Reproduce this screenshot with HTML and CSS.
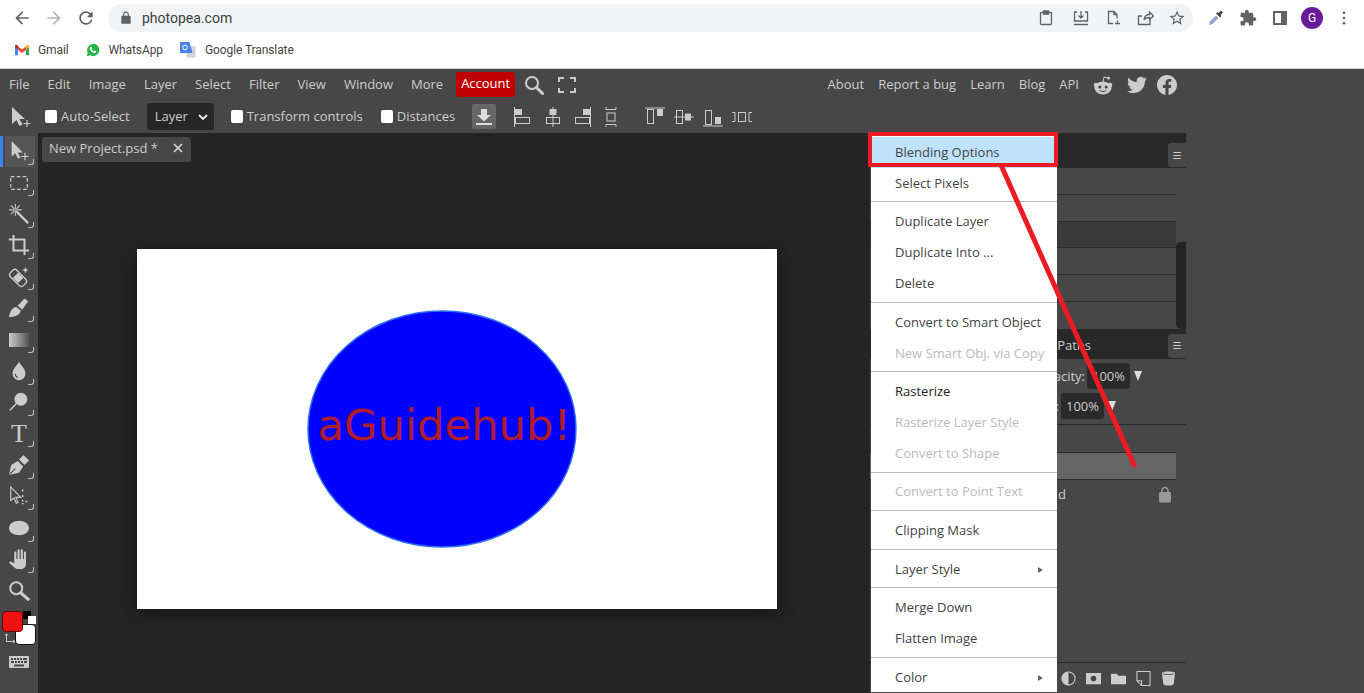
FILE: index.html
```html
<!DOCTYPE html>
<html lang="en">
<head>
    <meta charset="UTF-8">
    <meta name="viewport" content="width=device-width, initial-scale=1.0">
    <title>Photopea</title>
    <link rel="stylesheet" href="styles.css">
</head>
<body>
    <div class="browser-bar">
        <div class="nav-btn"><svg viewBox="0 0 24 24" class="ic-20 gray"><path d="M20 11H7.83l5.59-5.59L12 4l-8 8 8 8 1.41-1.41L7.83 13H20v-2z"/></svg></div>
        <div class="nav-btn"><svg viewBox="0 0 24 24" class="ic-20 light"><path d="M4 11h12.17l-5.59-5.59L12 4l8 8-8 8-1.41-1.41L16.17 13H4v-2z"/></svg></div>
        <div class="nav-btn"><svg viewBox="0 0 24 24" class="ic-20 gray"><path d="M17.65 6.35A7.958 7.958 0 0012 4c-4.42 0-7.99 3.58-7.99 8s3.57 8 7.99 8c3.73 0 6.84-2.55 7.73-6h-2.08A5.99 5.99 0 0112 18c-3.31 0-6-2.69-6-6s2.69-6 6-6c1.66 0 3.14.69 4.22 1.78L13 11h7V4l-2.35 2.35z"/></svg></div>
        <div class="url-pill">
            <svg viewBox="0 0 24 24" class="ic-14 gray"><path d="M18 8h-1V6c0-2.76-2.24-5-5-5S7 3.24 7 6v2H6c-1.1 0-2 .9-2 2v10c0 1.1.9 2 2 2h12c1.1 0 2-.9 2-2V10c0-1.1-.9-2-2-2zM9 6c0-1.66 1.34-3 3-3s3 1.34 3 3v2H9V6z"/></svg>
            <span class="url-text">photopea.com</span>
            <div class="url-actions">
                <div class="nav-btn nudge"><svg viewBox="0 0 18 18" class="ic-18 line"><rect x="3.5" y="3.5" width="11" height="12" rx="1"/><path d="M6.5 2h5v3h-5z" class="solid"/></svg></div>
                <div class="nav-btn"><svg viewBox="0 0 18 18" class="ic-18 line"><path d="M5 3H2.500v9h13V3H13M9 2v7M6.500 6.500 9 9l2.500-2.500M2 15.500h14"/></svg></div>
                <div class="nav-btn"><svg viewBox="0 0 18 18" class="ic-18 line"><path d="M9 14.500H4.500v-12H10l3 3v4M10 2.500v3h3M11 14.500h5M13.500 11.500v2"/></svg></div>
                <div class="nav-btn"><svg viewBox="0 0 18 18" class="ic-18 line"><path d="M14 10.500v5H2.500V7H6M8 11c0-4 3-5.500 5.500-5.500V3l4 4-4 3.500V8.500C11 8.500 9 9 8 11z"/></svg></div>
                <div class="nav-btn"><svg viewBox="0 0 24 24" class="ic-18 gray"><path d="M22 9.240l-7.190-.62L12 2 9.190 8.630 2 9.240l5.460 4.730L5.820 21 12 17.270 18.180 21l-1.630-7.030L22 9.240zM12 15.400l-3.760 2.270 1-4.280-3.320-2.880 4.380-.38L12 6.100l1.710 4.040 4.380.38-3.320 2.880 1 4.280L12 15.400z"/></svg></div>
            </div>
        </div>
        <div class="ext-icons">
            <div class="nav-btn"><svg viewBox="0 0 18 18" class="ic-18"><path d="M2 16l1-3.500 6-6 2.500 2.500-6 6z" fill="#8ea4d8"/><path d="M9 4.500l1.500-1.500 1 1 2.500-2.500 2 2-2.500 2.500 1 1-1.500 1.500z" fill="#444"/></svg></div>
            <div class="nav-btn"><svg viewBox="0 0 24 24" class="ic-18 gray"><path d="M20.500 11H19V7c0-1.100-.9-2-2-2h-4V3.500C13 2.120 11.880 1 10.500 1S8 2.120 8 3.500V5H4c-1.100 0-1.990.9-1.990 2v3.800H3.500c1.490 0 2.700 1.210 2.700 2.700s-1.210 2.700-2.700 2.700H2V20c0 1.100.9 2 2 2h3.800v-1.500c0-1.490 1.210-2.700 2.700-2.700 1.490 0 2.700 1.210 2.700 2.700V22H17c1.100 0 2-.9 2-2v-4h1.500c1.380 0 2.500-1.120 2.500-2.500S21.880 11 20.500 11z"/></svg></div>
            <div class="nav-btn"><div class="side-panel-ic"></div></div>
            <div class="nav-btn"><div class="avatar">G</div></div>
            <div class="nav-btn"><svg viewBox="0 0 4 16" class="ic-dots gray"><circle cx="2" cy="2" r="1.500"/><circle cx="2" cy="8" r="1.500"/><circle cx="2" cy="14" r="1.500"/></svg></div>
        </div>
    </div>

    <div class="bookmarks">
        <div class="bookmark">
            <svg viewBox="0 0 16 12" class="bm-ic"><path d="M0 2v9a1 1 0 001 1h2.500V5.500L0 2z" fill="#4285f4"/><path d="M16 2v9a1 1 0 01-1 1h-2.500V5.500L16 2z" fill="#34a853"/><path d="M3.500 6V2L8 5.500 12.500 2v4L8 9.400z" fill="#ea4335"/><path d="M0 2.500V1.600C0 .3 1.500-.4 2.500.4l1 .8v4.300z" fill="#c5221f"/><path d="M16 2.500V1.600c0-1.300-1.500-2-2.500-1.200l-1 .8v4.300z" fill="#fbbc04"/></svg>
            Gmail
        </div>
        <div class="bookmark">
            <svg viewBox="0 0 16 16" class="bm-ic"><path d="M1 15l1-3.800A7 7 0 118 15a7 7 0 01-3.300-.9z" fill="#25b34b"/><path d="M5.800 4.200c.4 0 .6.100.8.600l.5 1.200-.7 1c.6 1.200 1.500 2 2.700 2.600l.9-1 1.300.6c.3.200.4.400.3.800-.2.900-1.100 1.500-2 1.400-2.600-.3-5-2.600-5.400-5.100-.1-1 .6-2 1.600-2.100z" fill="#fff"/></svg>
            WhatsApp
        </div>
        <div class="bookmark">
            <svg viewBox="0 0 16 16" class="bm-ic"><path d="M5 4h10.500v11.500H7z" fill="#cfd3da"/><path d="M0 0h9.500l3 11H0z" fill="#4a84ec"/><circle cx="5" cy="5.500" r="2.300" fill="none" stroke="#fff" stroke-width="1"/></svg>
            Google Translate
        </div>
    </div>

    <div class="menu-bar">
        <span class="menu-item">File</span>
        <span class="menu-item">Edit</span>
        <span class="menu-item">Image</span>
        <span class="menu-item">Layer</span>
        <span class="menu-item">Select</span>
        <span class="menu-item">Filter</span>
        <span class="menu-item">View</span>
        <span class="menu-item">Window</span>
        <span class="menu-item">More</span>
        <span class="account-btn">Account</span>
        <svg viewBox="0 0 20 20" class="search-ic"><circle cx="8" cy="8" r="6" fill="none" stroke="#ccc" stroke-width="2"/><path d="M12.500 12.500l6 6" stroke="#ccc" stroke-width="3" stroke-linecap="round"/></svg>
        <svg viewBox="0 0 18 16" class="full-ic"><path d="M1 5V1h5M12 1h5v4M17 11v4h-5M6 15H1v-4" fill="none" stroke="#ccc" stroke-width="2"/></svg>
        <div class="menu-right">
            <span class="link-item">About</span>
            <span class="link-item">Report a bug</span>
            <span class="link-item">Learn</span>
            <span class="link-item">Blog</span>
            <span class="link-item">API</span>
            <svg viewBox="0 0 20 20" class="social reddit"><circle cx="3" cy="10" r="2.300"/><circle cx="17" cy="10" r="2.300"/><ellipse cx="10" cy="13" rx="8.500" ry="6.500"/><path d="M10 7l1-5 4 1" fill="none" stroke="#ccc" stroke-width="1"/><circle cx="15.500" cy="3" r="1.500"/><circle cx="6.800" cy="12" r="1.500" fill="#474747"/><circle cx="13.200" cy="12" r="1.500" fill="#474747"/><path d="M6.500 15.500c2 1.300 5 1.300 7 0" fill="none" stroke="#474747" stroke-width="1"/></svg>
            <svg viewBox="0 0 24 24" class="social twitter"><path d="M23.953 4.570a10 10 0 01-2.825.775 4.958 4.958 0 002.163-2.723c-.951.555-2.005.959-3.127 1.184a4.920 4.920 0 00-8.384 4.482C7.690 8.095 4.067 6.130 1.640 3.162a4.822 4.822 0 00-.666 2.475c0 1.710.870 3.213 2.188 4.096a4.904 4.904 0 01-2.228-.616v.060a4.923 4.923 0 003.946 4.827 4.996 4.996 0 01-2.212.085 4.936 4.936 0 004.604 3.417 9.867 9.867 0 01-6.102 2.105c-.390 0-.779-.023-1.170-.067a13.995 13.995 0 007.557 2.209c9.053 0 13.998-7.496 13.998-13.985 0-.210 0-.420-.015-.630A9.935 9.935 0 0024 4.590z"/></svg>
            <svg viewBox="0 0 24 24" class="social facebook"><path d="M24 12.073c0-6.627-5.373-12-12-12s-12 5.373-12 12c0 5.990 4.388 10.954 10.125 11.854v-8.385H7.078v-3.470h3.047V9.430c0-3.007 1.792-4.669 4.533-4.669 1.312 0 2.686.235 2.686.235v2.953H15.830c-1.491 0-1.956.925-1.956 1.874v2.250h3.328l-.532 3.470h-2.796v8.385C19.612 23.027 24 18.062 24 12.073z"/></svg>
        </div>
    </div>

    <div class="options-bar">
        <svg viewBox="0 0 22 22" class="opt-move"><path d="M1 1v17l4.500-4 3 6 3-1.500-3-5.500H14z"/><path d="M16 14v7M12.500 17.500h7" fill="none" stroke="#ccc" stroke-width="1.200"/></svg>
        <label class="check first"><span class="box"></span><span class="check-text">Auto-Select</span></label>
        <div class="select-box"><span class="check-text">Layer</span><svg viewBox="0 0 10 6" class="chevron"><path d="M1 1l4 4 4-4" fill="none" stroke="#eee" stroke-width="1.800"/></svg></div>
        <label class="check"><span class="box"></span><span class="check-text">Transform controls</span></label>
        <label class="check third"><span class="box"></span><span class="check-text">Distances</span></label>
        <div class="download-btn"><svg viewBox="0 0 18 18" class="ic-18"><path d="M6 1h6v6h4l-7 6.500L2 7h4zM1 15h16v2H1z" fill="#ddd"/></svg></div>
        <div class="align-group">
            <svg viewBox="0 0 18 22" class="al-ic"><path d="M1.500 1v20" class="al-line"/><rect x="2" y="3" width="7" height="6" class="al-fill"/><rect x="2.500" y="11.500" width="14" height="6" class="al-box"/></svg>
            <svg viewBox="0 0 18 22" class="al-ic"><path d="M9 1v20" class="al-line"/><rect x="5.500" y="3" width="7" height="6" class="al-fill"/><rect x="2.500" y="11.500" width="13" height="6" class="al-box"/></svg>
            <svg viewBox="0 0 18 22" class="al-ic"><path d="M16.500 1v20" class="al-line"/><rect x="9" y="3" width="7" height="6" class="al-fill"/><rect x="1.500" y="11.500" width="14" height="6" class="al-box"/></svg>
            <svg viewBox="0 0 12 22" class="al-ic narrow"><path d="M1 1v2.500h10V1M1 21v-2.500h10V21" class="al-box"/><rect x="2" y="7" width="8" height="8" class="al-box"/></svg>
        </div>
        <div class="align-group second">
            <svg viewBox="0 0 22 20" class="al-ic wide"><path d="M1 1h20" class="al-line"/><rect x="3.500" y="2.500" width="6" height="14" class="al-box"/><rect x="13" y="2" width="6" height="7" class="al-fill"/></svg>
            <svg viewBox="0 0 22 20" class="al-ic wide"><path d="M1 10h20" class="al-line"/><rect x="3.500" y="3.500" width="6" height="13" class="al-box"/><rect x="12" y="6.500" width="6" height="7" class="al-fill"/></svg>
            <svg viewBox="0 0 22 20" class="al-ic wide"><path d="M1 19h20" class="al-line"/><rect x="3.500" y="3.500" width="6" height="14" class="al-box"/><rect x="13" y="10" width="6" height="7" class="al-fill"/></svg>
            <svg viewBox="0 0 22 12" class="al-ic wide short"><path d="M1 1.500h3v9H1M21 1.500h-3v9h3" class="al-box"/><rect x="7.500" y="1.500" width="7" height="9" class="al-box"/></svg>
        </div>
    </div>

    <div class="workspace">
        <div class="tool-rail">
            <div class="tool active"><svg viewBox="0 0 24 24" class="tool-ic"><path d="M4 1v17l4-3.500 3 6 2.500-1.300-3-5.700H16z"/><path d="M18.500 14v8M14.500 18h8" fill="none" stroke="#ccc" stroke-width="1.300"/></svg></div>
            <div class="tool"><svg viewBox="0 0 24 24" class="tool-ic"><rect x="3" y="5" width="18" height="14" fill="none" stroke="#ccc" stroke-width="1.300" stroke-dasharray="4 2.500"/></svg></div>
            <div class="tool"><svg viewBox="0 0 24 24" class="tool-ic"><path d="M8 1v6M8 8v6M1 7.500h6M9 7.500h6M3 2.500l4 4M13 2.500l-4 4M3 12.500l4-4M13 12.500l-4-4" stroke="#ccc" stroke-width="1.100"/><path d="M9.500 9.500L22 22" stroke="#ccc" stroke-width="2.500"/></svg></div>
            <div class="tool"><svg viewBox="0 0 24 24" class="tool-ic"><path d="M6 1v17h17M1 6h17v17" fill="none" stroke="#ccc" stroke-width="2.200"/></svg></div>
            <div class="tool"><svg viewBox="0 0 24 24" class="tool-ic"><g transform="rotate(45 11 13)"><rect x="1" y="8" width="20" height="10" rx="3.500" fill="none" stroke="#ccc" stroke-width="1.500"/><rect x="7" y="9" width="8" height="8" fill="#ccc"/></g><path d="M19 1l1 2.500L22.500 4.500 20 5.500 19 8l-1-2.500L15.500 4.500 18 3.500z"/></svg></div>
            <div class="tool"><svg viewBox="0 0 24 24" class="tool-ic"><path d="M1 22C2 16 4 12 9 10.500L14 15C12.500 20 7 22 1 22z"/><path d="M10.500 9.500L18 1.500 22 4.500 15.500 14z"/></svg></div>
            <div class="tool"><div class="gradient-swatch"></div></div>
            <div class="tool"><svg viewBox="0 0 24 24" class="tool-ic"><path d="M12 2c3 5 7 8 7 13a7 7 0 01-14 0c0-5 4-8 7-13z"/><path d="M8 15a4 4 0 003 4" fill="none" stroke="#474747" stroke-width="1.200"/></svg></div>
            <div class="tool"><svg viewBox="0 0 24 24" class="tool-ic"><circle cx="14" cy="9" r="7"/><path d="M9 14l-7 7" stroke="#ccc" stroke-width="1.600"/></svg></div>
            <div class="tool"><span class="type-glyph">T</span></div>
            <div class="tool"><svg viewBox="0 0 24 24" class="tool-ic"><path d="M1 23L3.500 12 10.500 7.500 16.500 13.500 12 20.500z"/><path d="M1.500 22.500L8 16" stroke="#474747" stroke-width="1.100"/><path d="M12 6L17 1 23 7 18 12z"/></svg></div>
            <div class="tool"><svg viewBox="0 0 24 24" class="tool-ic"><path d="M3 2v15l3.500-3 2.500 6 2-1-2.500-5.500H14z" fill="none" stroke="#ccc" stroke-width="1.200"/><path d="M16 5v3M16 11v3M16 16v5M21 18h-3" stroke="#ccc" stroke-width="1.600" stroke-dasharray="2 1.500"/></svg></div>
            <div class="tool"><svg viewBox="0 0 24 24" class="tool-ic"><ellipse cx="12" cy="12" rx="11" ry="8"/></svg></div>
            <div class="tool"><svg viewBox="0 0 24 24" class="tool-ic"><path d="M8 13V5M11.500 13V2.500M15 13V2.500M18.500 14V5" fill="none" stroke="#ccc" stroke-width="2.300" stroke-linecap="round"/><path d="M6.800 12H19.600V17C19.600 21 17 23 14 23H11C8 23 6 20 1 16L3 14.500 6.800 17z"/></svg></div>
            <div class="tool plain"><svg viewBox="0 0 24 24" class="tool-ic"><circle cx="9" cy="9" r="6.500" fill="none" stroke="#ccc" stroke-width="2.200"/><path d="M14 14l8 7" stroke="#ccc" stroke-width="3.500" stroke-linecap="round"/></svg></div>
            <div class="swatches">
                <span class="sw-small sw-black"></span>
                <span class="sw-small sw-white"></span>
                <span class="sw-big sw-bg"></span>
                <span class="sw-big sw-fg"></span>
                <svg viewBox="0 0 12 11" class="sw-swap"><path d="M2.500 1v7.500H11M1 2.500L2.500.8 4 2.500M9 7l2 1.500L9 10" fill="none" stroke="#ccc" stroke-width="1"/></svg>
            </div>
            <svg viewBox="0 0 20 12" class="keyboard"><path fill-rule="evenodd" d="M1 0h18a1 1 0 011 1v10a1 1 0 01-1 1H1a1 1 0 01-1-1V1a1 1 0 011-1zM2 2v2h2V2zm3 0v2h2V2zm3 0v2h2V2zm3 0v2h2V2zm3 0v2h4V2zM2 5v2h3V5zm4 0v2h2V5zm3 0v2h2V5zm3 0v2h2V5zm3 0v2h3V5zM5 8.500v2h10v-2z"/></svg>
        </div>

        <div class="canvas-area">
            <div class="doc-tab"><span>New Project.psd *</span><svg viewBox="0 0 10 10" class="tab-close"><path d="M1 1l8 8M9 1l-8 8" stroke="#ddd" stroke-width="1.500"/></svg></div>
            <div class="doc">
                <svg viewBox="0 0 640 360" class="doc-art">
                    <ellipse cx="305" cy="180" rx="134" ry="118" fill="#0000ff" stroke="#2c6df2" stroke-width="1.500"/>
                    <text x="180.500" y="191" class="doc-text">aGuidehub!</text>
                </svg>
            </div>
        </div>

        <div class="panels">
            <div class="panel-head top">
                <span class="panel-menu">☰</span>
            </div>
            <div class="history">
                <div class="history-rows">
                    <div class="history-row"></div>
                    <div class="history-row"></div>
                    <div class="history-row dim"></div>
                    <div class="history-row"></div>
                    <div class="history-row"></div>
                    <div class="history-row no-line"></div>
                </div>
                <div class="scroll-track"><div class="scroll-thumb"></div></div>
            </div>
            <div class="panel-head">
                <span class="panel-tab">Paths</span>
                <span class="panel-menu">☰</span>
            </div>
            <div class="blend-row first-blend">acity:<span class="num-input">100%</span><span class="tri"></span></div>
            <div class="blend-row second-blend">:<span class="num-input">100%</span><span class="tri"></span></div>
            <div class="layers">
                <div class="layer-row"></div>
                <div class="layer-row selected"></div>
                <div class="layer-row bg-layer">
                    <span class="layer-name">d</span>
                    <svg viewBox="0 0 24 24" class="lock-ic"><path d="M18 8h-1V6c0-2.760-2.240-5-5-5S7 3.240 7 6v2H6c-1.100 0-2 .9-2 2v10c0 1.100.9 2 2 2h12c1.100 0 2-.9 2-2V10c0-1.100-.9-2-2-2zM9 6c0-1.660 1.340-3 3-3s3 1.340 3 3v2H9V6z"/></svg>
                </div>
            </div>
            <div class="panel-foot">
                <svg viewBox="0 0 16 16" class="foot-ic"><circle cx="8" cy="8" r="7" fill="none" stroke="#ccc" stroke-width="1.200"/><path d="M8 1a7 7 0 000 14z"/></svg>
                <svg viewBox="0 0 16 16" class="foot-ic"><path fill-rule="evenodd" d="M0 2h16v12H0zM8 5a3 3 0 100 6 3 3 0 000-6z"/></svg>
                <svg viewBox="0 0 16 16" class="foot-ic"><path d="M0 3h6l2 2h8v9H0z"/></svg>
                <svg viewBox="0 0 16 16" class="foot-ic"><path d="M1 .5h14v15H6l-5-5zM1 10.500h5v5" fill="none" stroke="#ccc" stroke-width="1.100"/></svg>
                <svg viewBox="0 0 16 16" class="foot-ic"><path d="M1 2c2-2 12-2 14 0l-1.500 12c-1 2-10 2-11 0z"/><path d="M2.500 3c2 1 9 1 11 0" stroke="#474747" fill="none"/></svg>
            </div>
        </div>
        <div class="right-strip"></div>
    </div>

    <div class="context-menu">
        <div class="ctx-item hover">Blending Options</div>
        <div class="ctx-item">Select Pixels</div>
        <div class="ctx-sep up"></div>
        <div class="ctx-item">Duplicate Layer</div>
        <div class="ctx-item">Duplicate Into ...</div>
        <div class="ctx-item">Delete</div>
        <div class="ctx-sep"></div>
        <div class="ctx-item">Convert to Smart Object</div>
        <div class="ctx-item off">New Smart Obj. via Copy</div>
        <div class="ctx-sep up"></div>
        <div class="ctx-item dark">Rasterize</div>
        <div class="ctx-item off">Rasterize Layer Style</div>
        <div class="ctx-item off">Convert to Shape</div>
        <div class="ctx-sep close"></div>
        <div class="ctx-item off">Convert to Point Text</div>
        <div class="ctx-sep"></div>
        <div class="ctx-item">Clipping Mask</div>
        <div class="ctx-sep"></div>
        <div class="ctx-item has-sub">Layer Style</div>
        <div class="ctx-sep up"></div>
        <div class="ctx-item">Merge Down</div>
        <div class="ctx-item">Flatten Image</div>
        <div class="ctx-sep"></div>
        <div class="ctx-item has-sub">Color</div>
    </div>

    <svg class="annotation" viewBox="0 0 1364 693">
        <rect x="870" y="134" width="186" height="31" fill="none" stroke="#ed1c24" stroke-width="4"/>
        <path d="M1001 165L1135 467" stroke="#ed1c24" stroke-width="5"/>
    </svg>
</body>
</html>
```

FILE: styles.css
```css
* {
    box-sizing: border-box;
}
body {
    margin: 0;
    width: 1364px;
    height: 693px;
    overflow: hidden;
    position: relative;
    background-color: #474747;
    font-family: "Open Sans", Arial, sans-serif;
    font-size: 13px;
    color: #ccc;
}

/* browser chrome */
.browser-bar {
    display: flex;
    align-items: center;
    height: 35px;
    padding: 1px 0 0 6px;
    background-color: white;
}
.nav-btn {
    width: 32px;
    height: 28px;
    display: flex;
    align-items: center;
    justify-content: center;
    flex-shrink: 0;
}
.nudge {
    margin-right: 3px;
}
.gray {
    fill: #5f6368;
}
.light {
    fill: #b4b6b9;
}
.ic-20 {
    width: 20px;
    height: 20px;
}
.ic-18 {
    width: 18px;
    height: 18px;
}
.ic-14 {
    width: 14px;
    height: 14px;
}
.ic-dots {
    width: 4px;
    height: 14px;
}
.line {
    fill: none;
    stroke: #5f6368;
    stroke-width: 1.300;
}
.line .solid {
    fill: #5f6368;
}
.url-pill {
    flex: 1;
    height: 28px;
    margin-left: 6px;
    padding-left: 11px;
    display: flex;
    align-items: center;
    background-color: #f1f3f4;
    border-radius: 14px;
}
.url-text {
    margin-left: 9px;
    font-family: Roboto, Arial, sans-serif;
    font-size: 14px;
    color: #3c4043;
}
.url-actions {
    margin-left: auto;
    display: flex;
    align-items: center;
}
.ext-icons {
    width: 171px;
    padding-left: 7px;
    display: flex;
    align-items: center;
}
.side-panel-ic {
    width: 14px;
    height: 14px;
    border: 2px solid #5f6368;
    border-right-width: 6px;
}
.avatar {
    width: 22px;
    height: 22px;
    border-radius: 50%;
    background-color: #6a1b9a;
    color: white;
    font-family: Roboto, Arial, sans-serif;
    font-size: 12px;
    line-height: 22px;
    text-align: center;
}
.bookmarks {
    display: flex;
    align-items: center;
    height: 34px;
    padding: 0 0 3px 15px;
    background-color: white;
    border-bottom: 1px solid #d0d0d0;
    font-family: Roboto, Arial, sans-serif;
    font-size: 12px;
    letter-spacing: -0.1px;
    color: #444;
}
.bookmark {
    display: flex;
    align-items: center;
    gap: 9px;
    margin-right: 17px;
}
.bm-ic {
    width: 14px;
    height: 14px;
}
.bookmark:last-child .bm-ic {
    width: 16px;
    height: 16px;
}

/* photopea top bars */
.menu-bar {
    display: flex;
    align-items: center;
    height: 31px;
    background-color: #474747;
}
.menu-item {
    padding: 0 9px 2px;
    white-space: nowrap;
}
.account-btn {
    margin-left: 4px;
    padding: 0 5px;
    height: 25px;
    line-height: 23px;
    background-color: #c00000;
    border-radius: 3px;
    color: white;
}
.search-ic {
    width: 20px;
    height: 20px;
    margin-left: 9px;
}
.full-ic {
    width: 18px;
    height: 16px;
    margin-left: 14px;
}
.menu-right {
    margin-left: auto;
    padding-right: 187px;
    display: flex;
    align-items: center;
}
.link-item {
    padding: 0 7px 2px;
    white-space: nowrap;
}
.social {
    fill: #ccc;
    width: 20px;
    height: 20px;
}
.reddit {
    margin-left: 7px;
}
.twitter {
    margin-left: 14px;
}
.facebook {
    margin-left: 10px;
}
.options-bar {
    display: flex;
    align-items: center;
    height: 33px;
    background-color: #474747;
}
.opt-move {
    width: 22px;
    height: 22px;
    margin-left: 11px;
    fill: #ccc;
}
.check {
    display: flex;
    align-items: center;
    gap: 4px;
    margin-left: 17px;
}
.check.first {
    margin-left: 12px;
}
.check.third {
    margin-left: 18px;
}
.check-text {
    padding-bottom: 2px;
}
.box {
    width: 12px;
    height: 13px;
    background-color: white;
    border-radius: 2px;
}
.select-box {
    display: flex;
    align-items: center;
    justify-content: space-between;
    width: 67px;
    height: 27px;
    margin-left: 17px;
    padding: 0 6px 0 8px;
    background-color: #262626;
    border-radius: 3px;
    color: #ccc;
}
.chevron {
    width: 10px;
    height: 6px;
}
.download-btn {
    display: flex;
    align-items: center;
    justify-content: center;
    width: 24px;
    height: 25px;
    margin-left: 17px;
    background-color: #666;
    border-radius: 2px;
}
.align-group {
    display: flex;
    align-items: center;
    gap: 12.500px;
    margin-left: 17px;
}
.align-group.second {
    gap: 7px;
    margin-left: 27px;
}
.al-ic {
    width: 18px;
    height: 22px;
    fill: none;
}
.al-ic.narrow {
    width: 12px;
}
.al-ic.wide {
    width: 22px;
    height: 20px;
}
.al-ic.short {
    height: 12px;
}
.al-line,
.al-box {
    fill: none;
    stroke: #ccc;
    stroke-width: 1;
}
.al-fill {
    fill: #ccc;
}

/* main area */
.workspace {
    display: flex;
    height: 560px;
}
.tool-rail {
    width: 38px;
    flex-shrink: 0;
    padding-top: 2.500px;
    background-color: #474747;
    display: flex;
    flex-direction: column;
    align-items: center;
}
.tool {
    position: relative;
    width: 38px;
    height: 31.400px;
    flex-shrink: 0;
    display: flex;
    align-items: center;
    justify-content: center;
}
.tool::after {
    content: "";
    position: absolute;
    right: 4px;
    bottom: 2px;
    width: 5px;
    height: 5px;
    border-right: 1px solid #bbb;
    border-bottom: 1px solid #bbb;
    border-bottom-right-radius: 3px;
}
.tool.plain::after {
    display: none;
}
.tool.active {
    background: linear-gradient(to right, #3b82e8 3px, #474747 3px, #474747 5px, #555 5px, #555 35px, #474747 35px);
}
.tool-ic {
    width: 22px;
    height: 22px;
    fill: #ccc;
}
.gradient-swatch {
    width: 20px;
    height: 14px;
    background: linear-gradient(to right, #ccc, #555);
}
.type-glyph {
    font-family: "Liberation Serif", serif;
    font-size: 26px;
    line-height: 1;
    color: #ccc;
}
.swatches {
    position: relative;
    width: 38px;
    height: 40px;
    margin-top: 5px;
    flex-shrink: 0;
}
.sw-big {
    position: absolute;
    width: 21px;
    height: 21px;
    border-radius: 4px;
}
.sw-fg {
    left: 2px;
    top: 0;
    background-color: #ee1111;
    border: 1px solid #600;
}
.sw-bg {
    left: 15px;
    top: 13px;
    background-color: white;
    border: 1px solid #111;
}
.sw-small {
    position: absolute;
    width: 8px;
    height: 8px;
}
.sw-black {
    left: 23px;
    top: 0;
    background-color: black;
}
.sw-white {
    left: 28px;
    top: 5px;
    background-color: white;
}
.sw-swap {
    position: absolute;
    left: 4px;
    top: 22px;
    width: 12px;
    height: 11px;
}
.keyboard {
    width: 20px;
    height: 12px;
    margin-top: 5px;
    fill: #ccc;
    flex-shrink: 0;
}
.canvas-area {
    width: 832px;
    flex-shrink: 0;
    padding: 4px 0 0 4px;
    background-color: #242424;
}
.doc-tab {
    display: flex;
    align-items: center;
    justify-content: space-between;
    width: 149px;
    height: 25px;
    padding: 0 8px 4px 7px;
    background-color: #474747;
    border-radius: 3px;
    white-space: nowrap;
}
.tab-close {
    width: 10px;
    height: 10px;
}
.doc {
    width: 640px;
    height: 360px;
    margin: 87px 0 0 95px;
    background-color: white;
    box-shadow: 0 4px 18px rgba(0, 0, 0, 0.45);
}
.doc-art {
    display: block;
    width: 640px;
    height: 360px;
}
.doc-text {
    font-family: "DejaVu Sans", sans-serif;
    font-size: 43.300px;
    fill: #b01c2e;
}

/* right panels */
.panels {
    width: 316px;
    flex-shrink: 0;
    display: flex;
    flex-direction: column;
    background-color: #474747;
}
.right-strip {
    flex: 1;
    background-color: #474747;
    border-left: 1px solid #424242;
}
.panel-head {
    display: flex;
    justify-content: flex-end;
    align-items: center;
    height: 30px;
    background-color: #282828;
    flex-shrink: 0;
}
.panel-head.top {
    height: 35px;
}
.panel-tab {
    margin: 2px 77px 0 0;
    white-space: nowrap;
}
.panel-menu {
    display: flex;
    align-items: center;
    justify-content: center;
    align-self: flex-end;
    width: 18px;
    height: 24px;
    margin-bottom: 1px;
    background-color: #474747;
    border-radius: 3px 0 0 3px;
    font-family: "DejaVu Sans", sans-serif;
    font-size: 10px;
}
.history {
    display: flex;
    flex-shrink: 0;
}
.history-rows {
    flex: 1;
}
.history-row {
    height: 26.750px;
    border-bottom: 1px solid #2a2a2a;
}
.history-row.dim {
    background-color: #3a3a3a;
}
.history-row.no-line {
    border-bottom: none;
}
.scroll-track {
    width: 10px;
    padding-top: 74px;
}
.scroll-thumb {
    height: 86.500px;
    background-color: #242424;
    border-radius: 5px 0 0 5px;
}
.blend-row {
    display: flex;
    align-items: center;
    justify-content: flex-end;
    height: 30px;
    flex-shrink: 0;
    white-space: nowrap;
}
.first-blend {
    margin-top: 2px;
    padding-right: 44px;
}
.second-blend {
    padding-right: 70px;
}
.num-input {
    width: 43px;
    height: 26px;
    margin-left: 2px;
    line-height: 26px;
    text-align: center;
    background-color: #2a2a2a;
    border-radius: 3px;
}
.tri {
    width: 0;
    height: 0;
    margin-left: 4px;
    border-left: 4.500px solid transparent;
    border-right: 4.500px solid transparent;
    border-top: 10px solid #ddd;
}
.layers {
    margin-top: 3px;
    padding-right: 10px;
    border-top: 1px solid #2a2a2a;
    flex: 1;
}
.layer-row {
    height: 28px;
    border-bottom: 1px solid #2a2a2a;
}
.layer-row.selected {
    height: 27px;
    background-color: #666;
}
.layer-row.bg-layer {
    height: 30px;
    border-bottom: none;
    display: flex;
    align-items: center;
    justify-content: space-between;
    padding: 0 2px 0 188px;
}
.layer-name {
    margin-bottom: 2px;
}
.lock-ic {
    width: 18px;
    height: 18px;
    fill: #999;
}
.panel-foot {
    height: 31px;
    flex-shrink: 0;
    border-top: 1px solid #2a2a2a;
    display: flex;
    align-items: center;
    justify-content: flex-end;
    gap: 10px;
    padding-right: 10px;
}
.foot-ic {
    width: 15px;
    height: 15px;
    fill: #ccc;
}

/* right click menu */
.context-menu {
    position: absolute;
    left: 871px;
    top: 135px;
    width: 186px;
    height: 557px;
    padding-top: 2px;
    background-color: white;
    color: #444;
    z-index: 5;
}
.ctx-item {
    position: relative;
    height: 31px;
    line-height: 31px;
    padding-left: 24px;
    white-space: nowrap;
}
.ctx-item.hover {
    background-color: #bfe3ff;
}
.ctx-item.dark {
    color: #222;
}
.ctx-item.off {
    color: #bbb;
}
.ctx-item.has-sub::after {
    content: "";
    position: absolute;
    right: 14px;
    top: 13px;
    border-left: 5px solid #666;
    border-top: 3px solid transparent;
    border-bottom: 3px solid transparent;
}
.ctx-sep {
    height: 1px;
    margin: 3px 0 4px;
    background-color: #bbb;
}
.ctx-sep.up {
    margin-top: 2px;
}
.ctx-sep.close {
    margin-bottom: 3px;
}
.annotation {
    position: absolute;
    left: 0;
    top: 0;
    width: 1364px;
    height: 693px;
    z-index: 6;
    pointer-events: none;
}
```
